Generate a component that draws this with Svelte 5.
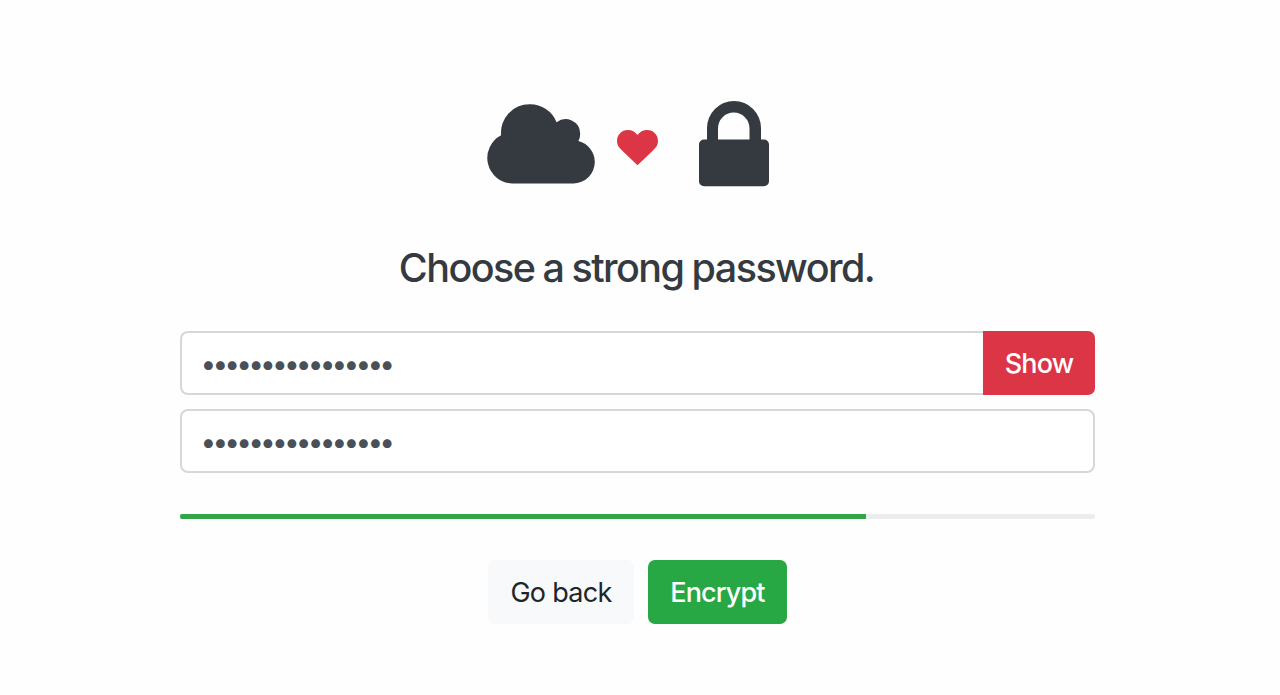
<script lang="ts">
	let password = $state('correct-horse-42');
	let confirmation = $state('correct-horse-42');
	let visible = $state(false);
	let strength = $derived(Math.min(100, (password.length / 16) * 75));
</script>

<main class="page">
	<div class="icons" aria-hidden="true">
		<svg class="cloud" width="108" height="80" viewBox="0 0 108 80">
			<path d="M25.1 79.5A25.6 25.6 0 0 1 14.1 31.2A28.4 28.4 0 0 1 42.5 0.2A28.4 28.4 0 0 1 69.6 18.2A14.5 14.5 0 0 1 93.1 29A14.5 14.5 0 0 1 91.4 37.1A21.8 21.8 0 0 1 107.8 58A21.6 21.6 0 0 1 86.2 79.5Z" />
		</svg>
		<svg class="heart" width="41" height="36" viewBox="0 0 41 36">
			<path d="M20.5 35.3L5.3 20.7C1.7 17.2 0 15 0 10.9C0 4.8 4.7 0 10.8 0C14.8 0 18.3 1.9 20.5 5C22.7 1.9 26.2 0 30.2 0C36.3 0 41 4.8 41 10.9C41 15 39.3 17.2 35.7 20.7Z" />
		</svg>
		<svg class="lock" width="70" height="86" viewBox="0 0 70 86">
			<path fill-rule="evenodd" d="M8 38.5V27a27 27 0 0 1 54 0V38.5H65a5 5 0 0 1 5 5V80.2a5 5 0 0 1-5 5H5a5 5 0 0 1-5-5V43.5a5 5 0 0 1 5-5ZM19 38.5H50.5V27.3a15.75 15.75 0 0 0-31.5 0Z" />
		</svg>
	</div>

	<h1>Choose a strong password.</h1>

	<form onsubmit={(e) => e.preventDefault()}>
		<div class="input-group">
			<input
				type={visible ? 'text' : 'password'}
				class:masked={!visible}
				aria-label="Password"
				bind:value={password}
			/>
			<button type="button" class="btn danger" onclick={() => (visible = !visible)}>
				{visible ? 'Hide' : 'Show'}
			</button>
		</div>
		<input
			type={visible ? 'text' : 'password'}
			class:masked={!visible}
			aria-label="Confirm password"
			bind:value={confirmation}
		/>

		<div class="progress">
			<div class="progress-bar" style="width: {strength}%"></div>
		</div>

		<div class="actions">
			<button type="button" class="btn light">Go back</button>
			<button type="submit" class="btn success">Encrypt</button>
		</div>
	</form>
</main>

<style>
	:global(body) {
		background: #fefefe;
	}

	.page {
		box-sizing: border-box;
		width: 915px;
		height: 695px;
		margin-left: 180px;
		padding-top: 101px;
		font-family: Inter, 'Liberation Sans', sans-serif;
		color: #343a40;
	}

	.icons {
		display: flex;
		align-items: flex-start;
		height: 86px;
		padding-left: 307px;
	}

	.icons svg {
		flex: none;
		overflow: visible;
		fill: #343a40;
	}

	.icons .cloud {
		margin-top: 3px;
	}

	.icons .heart {
		margin: 29px 41px 0 22px;
		fill: #dc3545;
	}

	h1 {
		margin: 56px 0 37.5px;
		padding-right: 2px;
		font-size: 39.5px;
		font-weight: 500;
		line-height: 50px;
		letter-spacing: -1.55px;
		word-spacing: -0.9px;
		text-align: center;
		white-space: nowrap;
	}

	input {
		display: block;
		box-sizing: border-box;
		width: 100%;
		height: 64px;
		padding: 2px 18.5px 0;
		border: 2px solid #d3d8dc;
		border-radius: 8px;
		outline: none;
		background: #fff;
		font-family: Inter, 'Liberation Sans', sans-serif;
		font-size: 28px;
		color: #495057;
	}

	.masked {
		letter-spacing: -3.83px;
	}

	.input-group {
		display: flex;
		margin-bottom: 14px;
	}

	.input-group input {
		flex: 1;
		min-width: 0;
		border-right: 0;
		border-radius: 8px 0 0 8px;
	}

	.btn {
		box-sizing: border-box;
		height: 64px;
		padding: 2px 0 0;
		border: 0;
		border-radius: 7px;
		font-family: inherit;
		font-size: 27px;
		font-weight: 450;
		letter-spacing: -0.85px;
		color: #fff;
	}

	.danger {
		width: 112px;
		border-radius: 0 7px 7px 0;
		background: #dc3545;
	}

	.progress {
		height: 5px;
		margin-top: 41px;
		border-radius: 2px;
		overflow: hidden;
		background: #ebedee;
	}

	.progress-bar {
		height: 100%;
		background: #32a54a;
	}

	.actions {
		display: flex;
		justify-content: center;
		gap: 14px;
		margin-top: 41px;
	}

	.light {
		width: 146px;
		background: #f8f9fa;
		font-weight: 400;
		letter-spacing: -0.7px;
		color: #212529;
	}

	.success {
		width: 139px;
		background: #28a745;
	}
</style>
